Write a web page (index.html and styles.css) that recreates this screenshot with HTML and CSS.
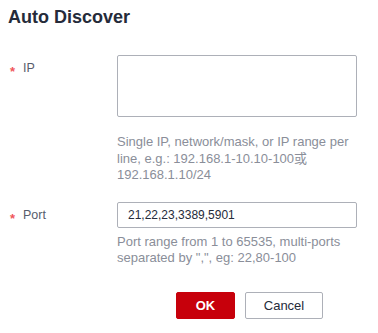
FILE: index.html
```html
<!DOCTYPE html>
<html lang="en">
<head>
  <meta charset="UTF-8">
  <title>Auto Discover</title>
  <link rel="stylesheet" href="styles.css">
</head>
<body>

<div class="dialog">
  <header class="dialog-title">Auto Discover</header>

  <form class="form">
    <div class="form-row">
      <label class="form-label"><span class="required">*</span>IP</label>
      <div class="form-control">
        <textarea class="textarea"></textarea>
        <div class="help help-ip">Single IP, network/mask, or IP range per line, e.g.: 192.168.1-10.10-100或192.168.1.10/24</div>
      </div>
    </div>

    <div class="form-row">
      <label class="form-label"><span class="required">*</span>Port</label>
      <div class="form-control">
        <input class="input" type="text" value="21,22,23,3389,5901">
        <div class="help help-port">Port range from 1 to 65535, multi-ports separated by ",", eg: 22,80-100</div>
      </div>
    </div>
  </form>

  <div class="dialog-footer">
    <button class="btn btn-primary">OK</button>
    <button class="btn btn-default">Cancel</button>
  </div>
</div>

</body>
</html>
```

FILE: styles.css
```css
body {
  margin: 0;
  background: #fff;
  font-family: "Liberation Sans", Arial, "Noto Sans CJK SC", sans-serif;
  color: #252b3a;
}
.dialog {
  padding: 5px 8px 0 8px;
}
.dialog-title {
  font-size: 18px;
  font-weight: bold;
  line-height: 24px;
  color: #252b3a;
}
.form {
  margin-top: 26px;
}
.form-row {
  display: flex;
}
.form-row + .form-row {
  margin-top: 18px;
}
.form-label {
  width: 109px;
  flex: none;
  font-size: 12.5px;
  line-height: 26px;
  color: #575d6c;
}
.required {
  display: inline-block;
  width: 15px;
  padding-left: 2px;
  box-sizing: border-box;
  color: #f0575b;
  font-size: 13px;
  font-weight: bold;
  vertical-align: -4px;
  line-height: 12px;
}
.form-control {
  width: 240px;
}
.textarea {
  display: block;
  box-sizing: border-box;
  width: 240px;
  height: 62px;
  margin: 0;
  border: 1px solid #adb0b8;
  border-radius: 2px;
  resize: none;
  font-family: inherit;
}
.input {
  display: block;
  box-sizing: border-box;
  width: 240px;
  height: 26px;
  margin: 0;
  padding: 0 10px;
  border: 1px solid #adb0b8;
  border-radius: 2px;
  font-family: inherit;
  font-size: 12px;
  color: #252b3a;
}
.help {
  font-size: 13px;
  line-height: 16.5px;
  color: #8a8e99;
}
.help-ip {
  margin-top: 17px;
}
.help-port {
  margin-top: 6px;
}
.dialog-footer {
  display: flex;
  gap: 10px;
  margin-top: 25px;
  margin-left: 168px;
}
.btn {
  height: 27px;
  padding: 0;
  font-family: inherit;
  font-size: 13px;
  border-radius: 2px;
  cursor: pointer;
}
.btn-primary {
  width: 59px;
  background: #c7000b;
  border: 1px solid #c7000b;
  color: #fff;
  font-weight: bold;
}
.btn-default {
  width: 78px;
  background: #fff;
  border: 1px solid #adb0b8;
  color: #252b3a;
}
```
